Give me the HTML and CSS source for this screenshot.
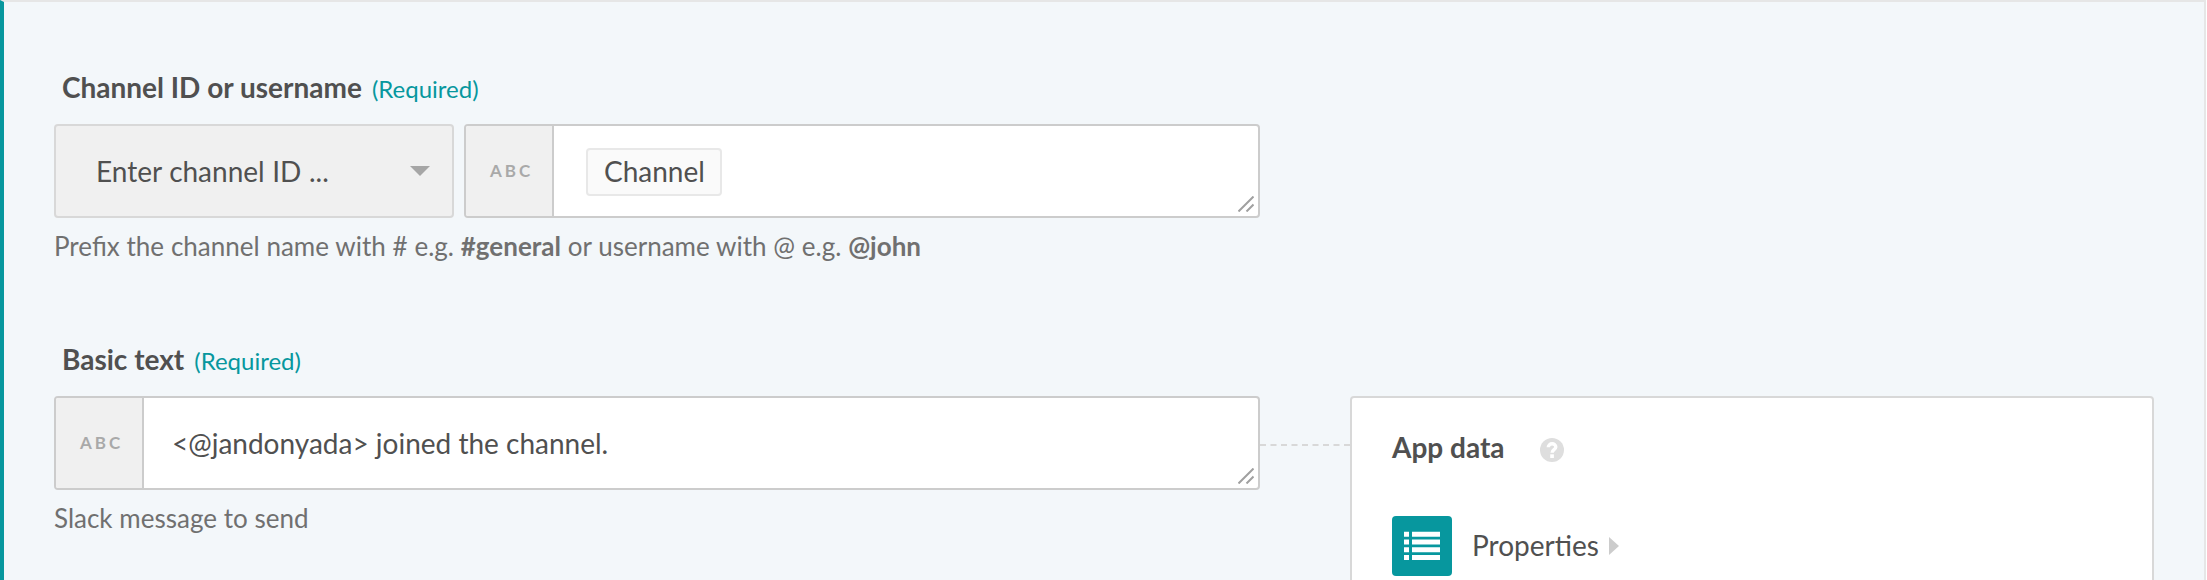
FILE: index.html
```
<!DOCTYPE html>
<html lang="en">
<head>
<meta charset="utf-8">
<title>Step setup</title>
<link rel="stylesheet" href="styles.css">
</head>
<body>
<main class="step">
  <section class="field">
    <h2 class="label">Channel ID or username<span class="required">(Required)</span></h2>
    <div class="controls">
      <div class="select"><span>Enter channel ID ...</span>
        <svg class="caret" width="20" height="10" viewBox="0 0 20 10"><path d="M0 0h20L10 10z" fill="#a6a6a6"/></svg>
      </div>
      <div class="input">
        <span class="type">ABC</span>
        <div class="value"><span class="pill">Channel</span></div>
        <svg class="grip" width="16" height="16" viewBox="0 0 16 16"><path d="M.5 15.500L15.500.5M8.500 15.500l7-7" stroke="#a0a0a0" stroke-width="2"/></svg>
      </div>
    </div>
    <p class="hint">Prefix the channel name with # e.g. <b>#general</b> or username with @ e.g. <b>@john</b></p>
  </section>
  <section class="field">
    <h2 class="label">Basic text<span class="required">(Required)</span></h2>
    <div class="row">
      <div class="main">
        <div class="controls">
          <div class="input">
            <span class="type">ABC</span>
            <div class="value text">&lt;@jandonyada&gt; joined the channel.</div>
            <svg class="grip" width="16" height="16" viewBox="0 0 16 16"><path d="M.5 15.500L15.500.5M8.500 15.500l7-7" stroke="#a0a0a0" stroke-width="2"/></svg>
          </div>
        </div>
        <p class="hint">Slack message to send</p>
      </div>
      <div class="connector"></div>
      <aside class="panel">
        <header class="panel-head">
          <h3 class="panel-title">App data</h3>
          <svg class="help" width="24" height="24" viewBox="0 0 24 24"><circle cx="12" cy="12" r="12" fill="#dedede"/><path d="M8.300 9.300C8.300 4.700 15.800 4.700 15.800 9c0 2.700-3.700 2.700-3.700 5.700" fill="none" stroke="#fff" stroke-width="3.400"/><path d="M10.200 16.300h3.700V20h-3.700z" fill="#fff"/></svg>
        </header>
        <div class="item">
          <svg class="item-icon" width="60" height="60" viewBox="0 0 60 60"><rect width="60" height="60" rx="4" fill="#07979e"/><path d="M12 15.700h5v5.100h-5zM20 15.700h28v5.100H20zM12 23.500h5v5.100h-5zM20 23.500h28v5.100H20zM12 31.300h5v5h-5zM20 31.300h28v5H20zM12 39h5v5h-5zM20 39h28v5H20z" fill="#fff"/></svg>
          <span class="item-name">Properties</span>
          <svg width="10" height="18" viewBox="0 0 10 18"><path d="M0 0L10 9L0 18z" fill="#ccc"/></svg>
        </div>
      </aside>
    </div>
  </section>
</main>
</body>
</html>
```
FILE: styles.css
```
* { box-sizing: border-box; }
body { margin: 0; overflow: hidden; background: #fff; font-family: Lato, sans-serif; font-size: 28px; color: #505050; }
.step { height: 580px; margin-right: 1px; overflow: hidden; padding: 67px 50px 0; background: #f3f7fa; border: solid #e6e6e6; border-width: 2px 2px 0 4px; border-left-color: #07979e; }
.field { height: 272px; }
.label { margin: 0 0 19px; padding-left: 8px; height: 36px; line-height: 36px; font-size: 28px; font-weight: 700; }
.required { margin-left: 10px; font-size: 24px; font-weight: 400; color: #07979e; }
.controls { display: flex; gap: 10px; width: 1206px; height: 94px; }
.select { display: flex; align-items: center; justify-content: space-between; width: 400px; padding: 0 22px 0 40px; background: #f0f0f0; border: 2px solid #d8d8d8; border-radius: 4px; word-spacing: .4px; }
.input { position: relative; display: flex; flex: 1; background: #fff; border: 2px solid #ccc; border-radius: 4px; overflow: hidden; }
.type { display: flex; align-items: center; width: 88px; padding: 0 0 2px 24px; background: #f0f0f0; border-right: 2px solid #ccc; color: #a9a9a9; font-size: 17px; font-weight: 700; letter-spacing: 3px; }
.value { display: flex; align-items: center; padding-left: 32px; }
.text { padding-left: 28px; }
.pill { height: 48px; margin-top: 2px; padding: 0 15px 0 16px; line-height: 43px; background: #fafafa; border: 2px solid #e8e8e8; border-radius: 4px; }
.grip { position: absolute; right: 4px; bottom: 4px; }
.hint { margin: 11px 0 0; line-height: 34px; font-size: 26px; word-spacing: .15px; color: #707070; }
.row { display: flex; align-items: flex-start; }
.connector { width: 90px; margin-top: 48px; border-top: 2px dashed #d8d8d8; }
.panel { width: 804px; height: 240px; padding: 31px 40px 0; background: #fff; border: 2px solid #d8d8d8; border-radius: 4px; }
.panel-head { display: flex; align-items: flex-start; height: 36px; }
.panel-title { margin: 0; font-size: 28px; line-height: 36px; }
.help { margin: 9px 0 0 35px; }
.item { display: flex; align-items: center; margin-top: 51px; }
.item-name { margin: 0 10px 2px 20px; }
```
